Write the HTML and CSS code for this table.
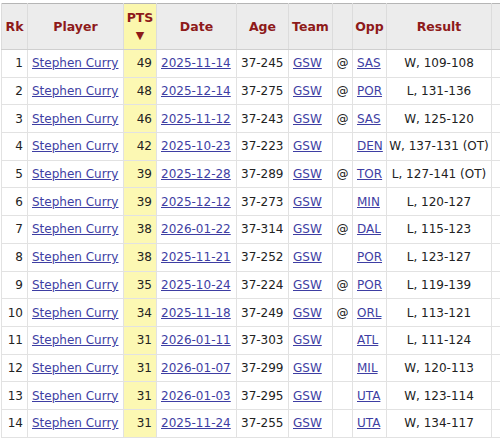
FILE: index.html
```html
<!DOCTYPE html>
<html>
<head>
<meta charset="utf-8">
<link rel="stylesheet" href="styles.css">
</head>
<body>
<div class="wrap">
<table class="stats">
<colgroup>
<col class="c-rk"><col class="c-player"><col class="c-pts"><col class="c-date"><col class="c-age"><col class="c-team"><col class="c-at"><col class="c-opp"><col class="c-res"><col class="c-next">
</colgroup>
<thead>
<tr>
<th>Rk</th><th>Player</th><th class="sorted">PTS<br><span class="arrow">▼</span></th><th>Date</th><th>Age</th><th>Team</th><th></th><th>Opp</th><th>Result</th><th class="next"></th>
</tr>
</thead>
<tbody>
<tr><td class="r">1</td><td><a href="#">Stephen Curry</a></td><td class="r pts">49</td><td><a href="#">2025-11-14</a></td><td>37-245</td><td><a href="#">GSW</a></td><td class="c">@</td><td><a href="#">SAS</a></td><td class="res">W, 109-108</td><td></td></tr>
<tr><td class="r">2</td><td><a href="#">Stephen Curry</a></td><td class="r pts">48</td><td><a href="#">2025-12-14</a></td><td>37-275</td><td><a href="#">GSW</a></td><td class="c">@</td><td><a href="#">POR</a></td><td class="res">L, 131-136</td><td></td></tr>
<tr><td class="r">3</td><td><a href="#">Stephen Curry</a></td><td class="r pts">46</td><td><a href="#">2025-11-12</a></td><td>37-243</td><td><a href="#">GSW</a></td><td class="c">@</td><td><a href="#">SAS</a></td><td class="res">W, 125-120</td><td></td></tr>
<tr><td class="r">4</td><td><a href="#">Stephen Curry</a></td><td class="r pts">42</td><td><a href="#">2025-10-23</a></td><td>37-223</td><td><a href="#">GSW</a></td><td class="c"></td><td><a href="#">DEN</a></td><td class="res">W, 137-131 (OT)</td><td></td></tr>
<tr><td class="r">5</td><td><a href="#">Stephen Curry</a></td><td class="r pts">39</td><td><a href="#">2025-12-28</a></td><td>37-289</td><td><a href="#">GSW</a></td><td class="c">@</td><td><a href="#">TOR</a></td><td class="res">L, 127-141 (OT)</td><td></td></tr>
<tr><td class="r">6</td><td><a href="#">Stephen Curry</a></td><td class="r pts">39</td><td><a href="#">2025-12-12</a></td><td>37-273</td><td><a href="#">GSW</a></td><td class="c"></td><td><a href="#">MIN</a></td><td class="res">L, 120-127</td><td></td></tr>
<tr><td class="r">7</td><td><a href="#">Stephen Curry</a></td><td class="r pts">38</td><td><a href="#">2026-01-22</a></td><td>37-314</td><td><a href="#">GSW</a></td><td class="c">@</td><td><a href="#">DAL</a></td><td class="res">L, 115-123</td><td></td></tr>
<tr><td class="r">8</td><td><a href="#">Stephen Curry</a></td><td class="r pts">38</td><td><a href="#">2025-11-21</a></td><td>37-252</td><td><a href="#">GSW</a></td><td class="c"></td><td><a href="#">POR</a></td><td class="res">L, 123-127</td><td></td></tr>
<tr><td class="r">9</td><td><a href="#">Stephen Curry</a></td><td class="r pts">35</td><td><a href="#">2025-10-24</a></td><td>37-224</td><td><a href="#">GSW</a></td><td class="c">@</td><td><a href="#">POR</a></td><td class="res">L, 119-139</td><td></td></tr>
<tr><td class="r">10</td><td><a href="#">Stephen Curry</a></td><td class="r pts">34</td><td><a href="#">2025-11-18</a></td><td>37-249</td><td><a href="#">GSW</a></td><td class="c">@</td><td><a href="#">ORL</a></td><td class="res">L, 113-121</td><td></td></tr>
<tr><td class="r">11</td><td><a href="#">Stephen Curry</a></td><td class="r pts">31</td><td><a href="#">2026-01-11</a></td><td>37-303</td><td><a href="#">GSW</a></td><td class="c"></td><td><a href="#">ATL</a></td><td class="res">L, 111-124</td><td></td></tr>
<tr><td class="r">12</td><td><a href="#">Stephen Curry</a></td><td class="r pts">31</td><td><a href="#">2026-01-07</a></td><td>37-299</td><td><a href="#">GSW</a></td><td class="c"></td><td><a href="#">MIL</a></td><td class="res">W, 120-113</td><td></td></tr>
<tr><td class="r">13</td><td><a href="#">Stephen Curry</a></td><td class="r pts">31</td><td><a href="#">2026-01-03</a></td><td>37-295</td><td><a href="#">GSW</a></td><td class="c"></td><td><a href="#">UTA</a></td><td class="res">W, 123-114</td><td></td></tr>
<tr><td class="r">14</td><td><a href="#">Stephen Curry</a></td><td class="r pts">31</td><td><a href="#">2025-11-24</a></td><td>37-255</td><td><a href="#">GSW</a></td><td class="c"></td><td><a href="#">UTA</a></td><td class="res">W, 134-117</td><td></td></tr>
</tbody>
</table>
</div>
</body>
</html>
```

FILE: styles.css
```css
html, body {
  margin: 0;
  padding: 0;
  background: #fff;
  overflow: hidden;
}
.wrap {
  padding: 3px 0 0 1px;
  width: 560px;
}
.stats {
  border-collapse: collapse;
  table-layout: fixed;
  width: 550px;
  font-family: "DejaVu Sans", Verdana, sans-serif;
  font-size: 12px;
  color: #222;
  border-top: 1px solid #b5b5b5;
  border-left: 1px solid #c8c8c8;
  border-bottom: 1px solid #c8c8c8;
}
.c-rk { width: 26px; }
.c-player { width: 96px; }
.c-pts { width: 33px; }
.c-date { width: 80px; }
.c-age { width: 52px; }
.c-team { width: 44px; }
.c-at { width: 20px; }
.c-opp { width: 34px; }
.c-res { width: 105px; }
.c-next { width: 60px; }
.stats th {
  background: #ececec;
  color: #8e1a1a;
  font-weight: bold;
  font-size: 12.5px;
  height: 45px;
  padding: 0;
  border: 1px solid #dcdcdc;
  border-top: none;
  border-bottom: 1px solid #cfcfcf;
  text-align: center;
  vertical-align: middle;
  line-height: 17px;
  white-space: nowrap;
  overflow: hidden;
}
.stats th.sorted {
  background: #fbf7ad;
}
.arrow {
  font-size: 11px;
}
.stats td {
  height: 26.7px;
  padding: 0 4px;
  border: 1px solid #e2e2e2;
  white-space: nowrap;
  overflow: hidden;
  vertical-align: middle;
}
.stats td.r { text-align: right; }
.stats td.c { text-align: center; padding: 0; }
.stats td.res { text-align: center; padding: 0 1px; }
.stats td.pts { background: #fcf8b3; }
.stats a {
  color: #3e3ea3;
  text-decoration: underline;
}
```
